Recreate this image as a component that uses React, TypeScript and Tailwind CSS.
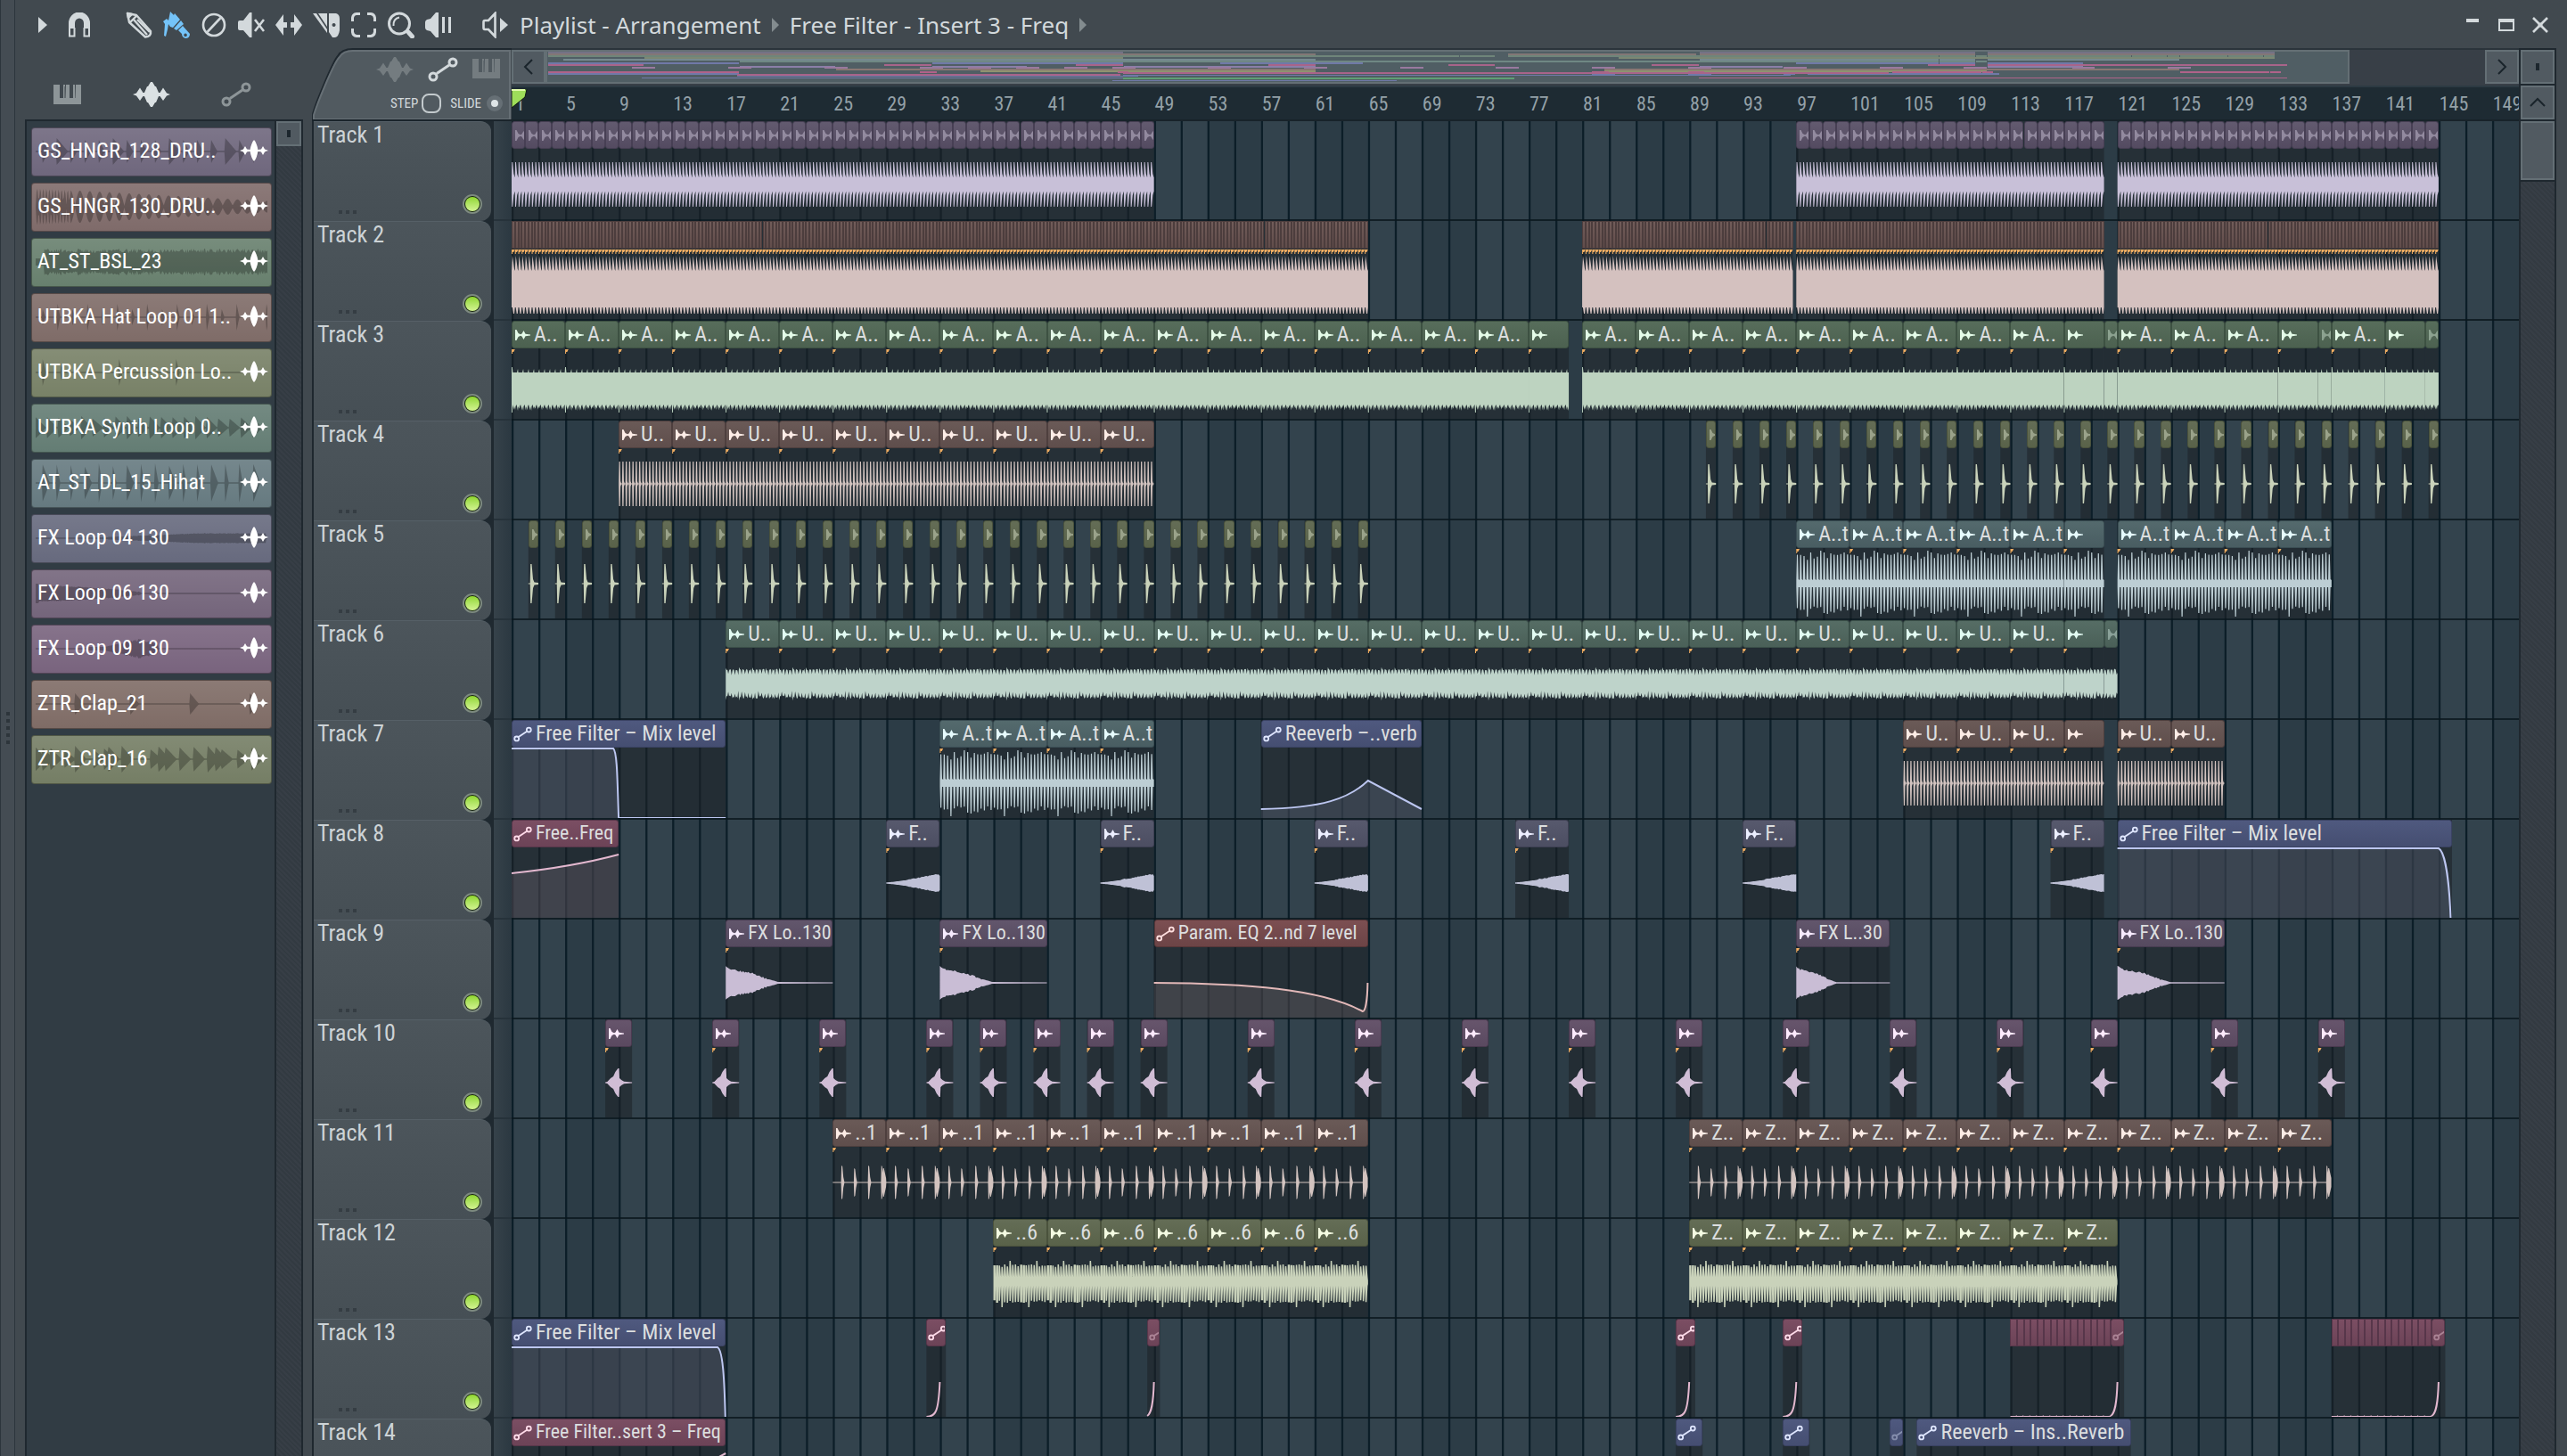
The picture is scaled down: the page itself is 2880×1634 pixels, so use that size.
import React, { useState } from 'react';

const BARS = 150;
const MID = 71;

type Sound =
  | 'drums' | 'kick' | 'bass' | 'hat' | 'perc' | 'synth' | 'ticks'
  | 'rise' | 'fall' | 'swell' | 'clap' | 'claps';

type Look = { head: string; wave: string; icon: string };

type Clips = {
  from: number;
  to: number;
  step?: number;
  every?: number; // distance between starts, when clips don't touch
  label?: string;
  look: keyof typeof LOOKS;
  sound?: Sound;
  curve?: string; // automation line, x in bars from the clip start, y in lane pixels
  faded?: boolean;
  bare?: boolean; // header without an icon
  tight?: boolean; // smaller label
  noMark?: boolean;
};

const LOOKS = {
  plum: { head: 'from-[#625a6f] to-[#544b61] border-[#473f54]', wave: '#c8c0d8', icon: '#e6def2' },
  rust: { head: 'from-[#715c59] to-[#614d4b] border-[#4c3d3d]', wave: '#d4c1bf', icon: '#fbeeea' },
  leaf: { head: 'from-[#576d5b] to-[#4c6150] border-[#3d5142]', wave: '#bdd3c0', icon: '#e4fbe8' },
  clay: { head: 'from-[#6a5a57] to-[#5f4e4c] border-[#4e3f3e]', wave: '#d2c3bf', icon: '#fdece6' },
  olive: { head: 'from-[#646d56] to-[#596249] border-[#4a523c]', wave: '#c9d2ba', icon: '#f4fbe2' },
  sea: { head: 'from-[#546a6d] to-[#495d62] border-[#3b4e54]', wave: '#bdced4', icon: '#e6fbfd' },
  mint: { head: 'from-[#566d65] to-[#4a6058] border-[#3b5049]', wave: '#bed3ca', icon: '#e2fbf2' },
  slate: { head: 'from-[#57596d] to-[#4c4e62] border-[#3e4053]', wave: '#bfc1d6', icon: '#eceeff' },
  violet: { head: 'from-[#62566c] to-[#554a5f] border-[#463b50]', wave: '#c9bdd5', icon: '#f6eafd' },
  grape: { head: 'from-[#67556c] to-[#5a4960] border-[#4a3a50]', wave: '#d0bdd5', icon: '#fdeafd' },
  blue: { head: 'from-[#4f597f] to-[#454e71] border-[#3a4262]', wave: '#bcc6f0', icon: '#dfe6ff' },
  rose: { head: 'from-[#7b4e63] to-[#6c4357] border-[#57364a]', wave: '#e3b8cf', icon: '#ffdbe9' },
  red: { head: 'from-[#7c4f52] to-[#6c4446] border-[#573638]', wave: '#e2b8b8', icon: '#ffdede' },
};

const LEVEL_LONG = 'M0 32H24C24.5 36 24.8 70 24.9 110';
const LEVEL_SHORT = 'M0 32H15.4C15.8 36 15.9 70 15.97 110';
const HIT = 'M0 110C.7 110 .9 104 1 71';
const SHORT_HIT = 'M0 109C.3 106 .45 96 .5 71';

const hit = (from: number, to: number, label?: string): Clips => ({ from, to, look: 'rose', curve: HIT, label });

const TRACKS: Clips[][] = [
  [
    { from: 0, to: 48, step: 1, look: 'plum', sound: 'drums', faded: true, noMark: true },
    { from: 96, to: 119, step: 1, look: 'plum', sound: 'drums', faded: true, noMark: true },
    { from: 120, to: 144, step: 1, look: 'plum', sound: 'drums', faded: true, noMark: true },
  ],
  [
    { from: 0, to: 64, step: 0.25, look: 'rust', sound: 'kick', bare: true },
    { from: 80, to: 95.75, step: 0.25, look: 'rust', sound: 'kick', bare: true },
    { from: 96, to: 119, step: 0.25, look: 'rust', sound: 'kick', bare: true },
    { from: 120, to: 144, step: 0.25, look: 'rust', sound: 'kick', bare: true },
  ],
  [
    { from: 0, to: 76, step: 4, label: 'A..', look: 'leaf', sound: 'bass' },
    { from: 76, to: 79, look: 'leaf', sound: 'bass' },
    { from: 80, to: 116, step: 4, label: 'A..', look: 'leaf', sound: 'bass' },
    { from: 116, to: 119, look: 'leaf', sound: 'bass' },
    { from: 119, to: 120, look: 'leaf', sound: 'bass', faded: true, noMark: true },
    { from: 120, to: 132, step: 4, label: 'A..', look: 'leaf', sound: 'bass' },
    { from: 132, to: 135, look: 'leaf', sound: 'bass' },
    { from: 135, to: 136, look: 'leaf', sound: 'bass', faded: true, noMark: true },
    { from: 136, to: 140, label: 'A..', look: 'leaf', sound: 'bass' },
    { from: 140, to: 143, look: 'leaf', sound: 'bass' },
    { from: 143, to: 144, look: 'leaf', sound: 'bass', faded: true, noMark: true },
  ],
  [
    { from: 8, to: 48, step: 4, label: 'U..', look: 'clay', sound: 'hat' },
    { from: 89.25, to: 144, step: 0.75, every: 2, look: 'olive', sound: 'perc', faded: true, noMark: true },
  ],
  [
    { from: 1.25, to: 64, step: 0.75, every: 2, look: 'olive', sound: 'perc', faded: true, noMark: true },
    { from: 96, to: 116, step: 4, label: 'A..t', look: 'sea', sound: 'ticks' },
    { from: 116, to: 119, look: 'sea', sound: 'ticks' },
    { from: 120, to: 136, step: 4, label: 'A..t', look: 'sea', sound: 'ticks' },
  ],
  [
    { from: 16, to: 116, step: 4, label: 'U..', look: 'mint', sound: 'synth' },
    { from: 116, to: 119, look: 'mint', sound: 'synth' },
    { from: 119, to: 120, look: 'mint', sound: 'synth', faded: true, noMark: true },
  ],
  [
    { from: 0, to: 16, label: 'Free Filter – Mix level', look: 'blue', curve: 'M0 32H7.6C7.9 36 7.9 70 8 110H16' },
    { from: 32, to: 48, step: 4, label: 'A..t', look: 'sea', sound: 'ticks' },
    { from: 56, to: 68, label: 'Reeverb –..verb', look: 'blue', curve: 'M0 100C4.6 99 6.6 88 8 68L12 100' },
    { from: 104, to: 116, step: 4, label: 'U..', look: 'clay', sound: 'hat' },
    { from: 116, to: 119, look: 'clay', sound: 'hat' },
    { from: 120, to: 128, step: 4, label: 'U..', look: 'clay', sound: 'hat' },
  ],
  [
    { from: 0, to: 8, label: 'Free..Freq', look: 'rose', curve: 'M0 60Q4.5 53 8 39', tight: true },
    { from: 28, to: 32, label: 'F..', look: 'slate', sound: 'rise' },
    { from: 44, to: 48, label: 'F..', look: 'slate', sound: 'rise' },
    { from: 60, to: 64, label: 'F..', look: 'slate', sound: 'rise' },
    { from: 75, to: 79, label: 'F..', look: 'slate', sound: 'rise' },
    { from: 92, to: 96, label: 'F..', look: 'slate', sound: 'rise' },
    { from: 115, to: 119, label: 'F..', look: 'slate', sound: 'rise' },
    { from: 120, to: 145, label: 'Free Filter – Mix level', look: 'blue', curve: LEVEL_LONG },
  ],
  [
    { from: 16, to: 24, label: 'FX Lo..130', look: 'violet', sound: 'fall', tight: true },
    { from: 32, to: 40, label: 'FX Lo..130', look: 'violet', sound: 'fall', tight: true },
    { from: 48, to: 64, label: 'Param. EQ 2..nd 7 level', look: 'red', tight: true, curve: 'M0 71C7 71.5 12.5 78 15.6 103C15.8 103 15.95 90 15.97 71' },
    { from: 96, to: 103, label: 'FX L..30', look: 'violet', sound: 'fall', tight: true },
    { from: 120, to: 128, label: 'FX Lo..130', look: 'violet', sound: 'fall', tight: true },
  ],
  [7, 15, 23, 31, 35, 39, 43, 47, 55, 63, 71, 79, 87, 95, 103, 111, 118, 127, 135].map((from) => ({
    from, to: from + 2, look: 'grape', sound: 'swell',
  })),
  [
    { from: 24, to: 64, step: 4, label: '..1', look: 'clay', sound: 'clap' },
    { from: 88, to: 136, step: 4, label: 'Z..', look: 'clay', sound: 'clap' },
  ],
  [
    { from: 36, to: 64, step: 4, label: '..6', look: 'olive', sound: 'claps' },
    { from: 88, to: 120, step: 4, label: 'Z..', look: 'olive', sound: 'claps' },
  ],
  [
    { from: 0, to: 16, label: 'Free Filter – Mix level', look: 'blue', curve: LEVEL_SHORT },
    hit(31, 32.45),
    { from: 47.5, to: 48.45, look: 'rose', curve: SHORT_HIT, faded: true },
    hit(87, 88.45),
    hit(95, 96.45),
    { from: 112, to: 119.5, step: 0.5, look: 'rose', curve: 'M0 110L.4 110L.5 109', bare: true },
    { from: 119.5, to: 120.5, look: 'rose', curve: SHORT_HIT, faded: true },
    { from: 136, to: 143.5, step: 0.5, look: 'rose', curve: 'M0 110L.4 110L.5 109', bare: true },
    { from: 143.5, to: 144.5, look: 'rose', curve: SHORT_HIT, faded: true },
  ],
  [
    { from: 0, to: 16, label: 'Free Filter..sert 3 – Freq', look: 'rose', curve: 'M15.5 43L16 39', tight: true },
    { from: 87, to: 89, look: 'blue', curve: '' },
    { from: 95, to: 97, look: 'blue', curve: '' },
    { from: 103, to: 104, look: 'blue', curve: '', faded: true },
    { from: 105, to: 121, label: 'Reeverb – Ins..Reverb', look: 'blue', curve: '' },
  ],
];

const LIBRARY = [
  { name: 'GS_HNGR_128_DRU..', color: 'bg-[#6f677d]', wave: 'drums' },
  { name: 'GS_HNGR_130_DRU..', color: 'bg-[#7f6b6a]', wave: 'kick' },
  { name: 'AT_ST_BSL_23', color: 'bg-[#68806e]', wave: 'bass' },
  { name: 'UTBKA Hat Loop 01 1..', color: 'bg-[#7f6c68]', wave: 'hat' },
  { name: 'UTBKA Percussion Lo..', color: 'bg-[#788167]', wave: 'perc' },
  { name: 'UTBKA Synth Loop 0..', color: 'bg-[#647d74]', wave: 'synth' },
  { name: 'AT_ST_DL_15_Hihat', color: 'bg-[#667a80]', wave: 'ticks' },
  { name: 'FX Loop 04 130', color: 'bg-[#676a7e]', wave: 'rise' },
  { name: 'FX Loop 06 130', color: 'bg-[#74657b]', wave: 'fall' },
  { name: 'FX Loop 09 130', color: 'bg-[#79647e]', wave: 'swell' },
  { name: 'ZTR_Clap_21', color: 'bg-[#7f6c66]', wave: 'clap' },
  { name: 'ZTR_Clap_16', color: 'bg-[#757e65]', wave: 'claps' },
] as const;

const noise = (i: number) => {
  const n = Math.sin(i * 127.1 + 11.7) * 43758.5453;
  return n - Math.floor(n);
};

// closed outline from [x, top, bottom] samples
const outline = (points: number[][]) =>
  'M' + points.map(([x, t]) => `${x.toFixed(3)} ${t.toFixed(1)}`).join('L') +
  'L' + [...points].reverse().map(([x, , b]) => `${x.toFixed(3)} ${b.toFixed(1)}`).join('L') + 'Z';

// half height of the falling effect over its length, t from 0 to 1
function fallOff(t: number) {
  const stops = [[0, 18.5], [0.1, 15], [0.5, 10.5], [0.75, 5], [0.95, 1.5], [1, 0.7]];
  for (let i = 1; i < stops.length; i++) {
    const [t0, h0] = stops[i - 1];
    const [t1, h1] = stops[i];
    if (t <= t1) return h0 + ((h1 - h0) * (t - t0)) / (t1 - t0);
  }
  return 0.7;
}

function wavePath(sound: Sound, a: number, b: number): string {
  const p: number[][] = [];
  const even = (x: number, h: number) => p.push([x, MID - h, MID + h]);

  if (sound === 'drums') {
    for (let x = a; x < b; x += 0.25) {
      even(x, 8); even(x + 0.02, 25); even(x + 0.08, 25); even(x + 0.16, 12); even(x + 0.24, 8);
    }
    even(b, 8);
  } else if (sound === 'kick') {
    for (let x = a; x < b; x += 0.25) {
      p.push([x, 56, 97], [x + 0.06, 39, 97], [x + 0.13, 46, 104], [x + 0.2, 54, 104], [x + 0.25, 56, 97]);
    }
  } else if (sound === 'bass') {
    for (let x = a; x < b - 0.01; x += 0.1) {
      const i = Math.round((x % 4) * 10) % 40;
      if (i === 0) p.push([x, 52, 103], [x + 0.06, 52, 103]);
      else p.push([x, 58, 96]);
      p.push([x + 0.07, i % 4 === 0 ? 54 : 58, i % 3 ? 98 + noise(i) * 3 : 94]);
    }
    p.push([b, 58, 96]);
  } else if (sound === 'hat') {
    for (let x = a; x < b; x += 0.25) {
      even(x, 0.5); even(x + 0.03, 25); even(x + 0.11, 25); even(x + 0.14, 3); even(x + 0.2, 0.5);
    }
    even(b, 0.5);
  } else if (sound === 'perc') {
    even(a, 0.5); even(a + 0.13, 0.5); even(a + 0.16, 22); even(a + 0.25, 22);
    even(a + 0.35, 5); even(a + 0.45, 1.5); even(b, 1);
  } else if (sound === 'ticks') {
    for (let x = a; x < b; x += 0.25) {
      const i = Math.round((x % 4) * 4);
      const up = i === 7 ? 37 : 26 + noise(i) * 9;
      const dn = i === 3 ? 37 : 25 + noise(i + 40) * 9;
      p.push([x, 67, 75], [x + 0.04, MID - up, MID + dn], [x + 0.12, MID - up, MID + dn], [x + 0.17, 66, 75]);
    }
    even(b, 4);
  } else if (sound === 'synth') {
    for (let x = a; x < b; x += 0.0625) {
      const i = Math.round((x % 4) * 16) % 64;
      const loud = i % 16 === 0 ? 19 : i % 4 < 3 ? 16.5 : 11;
      p.push([x, MID - loud + noise(i) * 2, MID + loud + 1 - noise(i + 9) * 4]);
    }
    even(b, 12);
  } else if (sound === 'rise') {
    for (let x = a; x <= b; x += 0.1) {
      const t = (x - a) / 4;
      even(x, 0.7 + 8.5 * Math.min(1, Math.pow(t, 1.3) * 1.1) + (t > 0.4 ? noise(x * 10) : 0));
    }
    even(b, 8);
  } else if (sound === 'fall') {
    const length = b - a - 4;
    for (let x = a; x < a + length; x += 0.1) {
      const t = (x - a) / length;
      even(x, fallOff(t) + (t < 0.8 ? noise(x * 10) * 2 - 1 : 0));
    }
    even(b, 0.6);
  } else if (sound === 'swell') {
    even(a, 0.5); even(a + 0.15, 1); even(a + 0.4, 5); even(a + 0.6, 7); even(a + 0.75, 12);
    even(a + 0.95, 16); even(a + 1.03, 16); even(a + 1.06, 5); even(a + 1.2, 3); even(a + 1.4, 1.3); even(b, 0.6);
  } else if (sound === 'clap') {
    for (let x = a; x < b; x += 4) {
      even(x, 0.6);
      [0.65, 1.6, 2.65].forEach((at, i) => {
        const h = i === 1 ? 16 : 19;
        even(x + at - 0.03, 0.6); even(x + at, h); even(x + at + 0.07, h - 1);
        even(x + at + 0.14, 6); even(x + at + 0.22, 0.6);
      });
      even(x + 3.6, 0.6); even(x + 3.63, 19); even(x + 3.69, 18); even(x + 3.73, 11);
      even(x + 3.76, 16); even(x + 3.82, 16); even(x + 3.98, 5);
    }
  } else {
    for (let x = a; x < b; x += 0.2) {
      const i = Math.round((x % 4) * 5) % 20;
      const up = i % 10 === 6 ? 24 : 17 + noise(i) * 3;
      const dn = i % 10 === 3 ? 28 : 20 + noise(i + 3) * 3;
      p.push([x, MID - up, MID + dn], [x + (i % 10 < 2 ? 0.16 : 0.1), MID - up, MID + dn], [x + 0.17, 65, 75]);
    }
    even(b, 2);
  }
  return outline(p.map(([x, t, bt]) => [Math.min(x, b), t, bt]));
}

// bursts for the clip previews in the picker, drawn in a 264x44 box
function previewPath(kind: Sound): string {
  const h = new Array(265).fill(0.8);
  const burst = (at: number, amp: number, decay: number) => {
    for (let x = Math.max(0, at); x < 265 && x < at + decay; x++) h[x] = Math.max(h[x], amp * (1 - (x - at) / decay));
  };
  if (kind === 'drums') for (let i = 0; i < 16; i++) burst(8 + i * 16, i % 4 === 1 ? 15 : 13, i % 4 === 1 ? 13 : 7);
  if (kind === 'kick') for (let x = 0; x < 265; x++) h[x] = 1 + Math.abs(Math.sin(x * (x < 40 ? 0.9 : 0.28))) * (20 - x * 0.055);
  if (kind === 'bass') for (let x = 0; x < 265; x++) h[x] = x < 10 ? 4 : 10 + noise(x) * 5;
  if (kind === 'hat') for (let i = 0; i < 16; i++) burst(8 + i * 17, i % 2 ? 15 : 9, 3);
  if (kind === 'perc') [8, 29, 95, 160].forEach((x, i) => burst(x, i === 1 ? 9 : 15, 4));
  if (kind === 'synth') for (let i = 0; i < 20; i++) burst(i * 13, 9 + noise(i) * 4, 12);
  if (kind === 'ticks') for (let i = 0; i < 16; i++) burst(8 + i * 16, 18 + noise(i) * 4, i % 3 ? 4 : 8);
  if (kind === 'rise') for (let x = 70; x < 263; x++) h[x] = Math.min(5, (x - 60) * 0.04) + noise(x) * 0.7;
  if (kind === 'fall') for (let x = 0; x < 120; x++) h[x] = x < 4 ? 11 : Math.max(0.8, 8 - Math.pow(x / 45, 2) + noise(x));
  if (kind === 'swell') for (let x = 60; x < 140; x++) h[x] = 2 + Math.max(0, 8 - Math.abs(x - 118) * 0.2) * (0.8 + noise(x) * 0.4);
  if (kind === 'clap') [45, 108, 176, 244].forEach((x) => burst(x, 12, 10));
  if (kind === 'claps') [0, 8, 17, 33, 45, 66, 78, 83, 98, 131, 140, 148, 164, 180, 196, 205, 212, 230, 246].forEach((x, i) => burst(x, 9 + noise(i) * 6, 13));
  return outline(h.map((v, x) => [x, 22 - v, 22 + v]));
}

function AutomationIcon({ className = '' }: { className?: string }) {
  return (
    <svg viewBox="0 0 34 28" className={className} fill="none" stroke="currentColor" strokeWidth="3">
      <circle cx="6" cy="22" r="4" />
      <circle cx="28" cy="6" r="4" />
      <path d="M10 18.500L24 9" />
    </svg>
  );
}

function WaveIcon({ className = '' }: { className?: string }) {
  return (
    <svg viewBox="0 0 42 28" className={className} fill="currentColor">
      <path d="M0 14L4 12.500L8 6.500L11.500 12L13 12L16 5H17L20 0H22L25 5H26L29 12L30.500 12L34 6.500L38 12.500L42 14L38 15.500L34 21L30.500 16L29 16L26 23H25L22 28H20L17 23H16L13 16L11.500 16L8 21L4 15.500Z" />
    </svg>
  );
}

function SparkIcon({ className = '' }: { className?: string }) {
  return (
    <svg viewBox="0 0 32 24" className={className} fill="currentColor">
      <path d="M0 12L4 10.500L6 7L8 10.500L11.500 11C12.500 6 14 2 16 0C18 2 19.500 6 20.500 11L24 10.500L26 7L28 10.500L32 12L28 13.500L26 17L24 13.500L20.500 13C19.500 18 18 22 16 24C14 22 12.500 18 11.500 13L8 13.500L6 17L4 13.500Z" />
    </svg>
  );
}

function PianoIcon({ className = '' }: { className?: string }) {
  return (
    <svg viewBox="0 0 31 22" className={className} fill="currentColor">
      <path d="M0 0H7V15H11V0H13V2H12.500V15H13.500L14 0H18V15H22V0H24L24.500 15H25V0H31V22H0Z" />
    </svg>
  );
}

function ClipIcon({ color }: { color: string }) {
  return (
    <svg viewBox="0 0 17 12" className="ml-[3px] mt-px h-3 w-[17px] shrink-0" fill={color}>
      <path d="M0 0L1.500 0L3.500 4L6 5.200L7.500 4.500L9.500 1L11.500 4.800L17 5.500V6.500L11.500 7.200L9.500 11L7.500 7.500L6 6.800L3.500 8L1.500 12H0Z" />
    </svg>
  );
}

const TOOLS: { name: string; art: React.ReactNode }[] = [
  {
    name: 'Draw',
    art: (
      <g fill="none" stroke="currentColor" strokeWidth="2.400" strokeLinejoin="round">
        <path d="M2 2L12 4L28 22Q29 28 22 28.500L4 12Z" />
        <path d="M12 5L5 12M9 9L24 26M13 9L27 23" />
        <path d="M2 2L7 3L3 7Z" fill="currentColor" />
      </g>
    ),
  },
  {
    name: 'Paint',
    art: (
      <g fill="currentColor">
        <path d="M0 11L4 8L6 10L8 0L12 4L13 2L19 9L11 18L8 17L6 14L5 20L3 28L1 27L2 14Z" />
        <path d="M20 10L23 14L15 21L12 19Z" />
        <path fillRule="evenodd" d="M22 16L30 25Q30 30 25 30Q21 29 21 25L17 21ZM25 24.500a1.800 1.800 0 1 0 .1 0Z" />
      </g>
    ),
  },
  {
    name: 'Delete',
    art: (
      <g fill="none" stroke="currentColor" strokeWidth="2.600">
        <circle cx="15" cy="15" r="12" />
        <path d="M7.500 23L22.500 7" />
      </g>
    ),
  },
  {
    name: 'Mute',
    art: (
      <g>
        <path fill="currentColor" d="M0 12Q0 10 2 10H6L13 1H15.500V29H13L6 21H2Q0 21 0 19Z" />
        <path d="M19 9L29 22M29 9L19 22" stroke="currentColor" strokeWidth="2.600" />
      </g>
    ),
  },
  {
    name: 'Slip',
    art: <path fill="currentColor" d="M0 15L9 3V12H13V18H9V27ZM30 15L21 3V12H17V18H21V27Z" />,
  },
  {
    name: 'Slice',
    art: (
      <g fill="currentColor">
        <path d="M0 2H4L16 20V24Z" />
        <path d="M6 2H16V17Z" />
        <path fillRule="evenodd" d="M18 2H26Q30 3 30 8V21Q29 28 25 29H22L18 23ZM23.500 13a2 2 0 1 0 .1 0Z" />
      </g>
    ),
  },
  {
    name: 'Select',
    art: (
      <path
        fill="none" stroke="currentColor" strokeWidth="3"
        d="M2.500 11V7Q3 3 7 2.500H11M19 2.500H23Q27 3 27.500 7V11M27.500 19V23Q27 27 23 27.500H19M11 27.500H7Q3 27 2.500 23V19"
      />
    ),
  },
  {
    name: 'Zoom',
    art: (
      <g fill="none" stroke="currentColor">
        <circle cx="13" cy="13.500" r="11.500" strokeWidth="3" />
        <path d="M6.500 16Q6 8 13 6.500" strokeWidth="2" />
        <path d="M23.500 23.500L27.500 28" strokeWidth="5" strokeLinecap="round" />
      </g>
    ),
  },
  {
    name: 'Playback',
    art: (
      <g fill="currentColor">
        <path d="M0 12Q0 10 2 9L6 8L12 1H15V29H12L6 22L2 21Q0 20 0 18Z" />
        <path d="M19 6H22V24H19ZM26 6H29V24H26Z" />
      </g>
    ),
  },
];

function Toolbar() {
  const [tool, setTool] = useState('Paint');

  return (
    <header className="flex h-[54px] shrink-0 items-center pl-[21px] pr-[10px] pt-[2px] text-[#d3d9dc]">
      <button aria-label="Menu" className="w-5">
        <svg viewBox="0 0 10 18" className="mx-auto h-[18px] w-[10px]" fill="currentColor"><path d="M0 0L10 9L0 18Z" /></svg>
      </button>
      <button aria-label="Snap" className="ml-4 w-[30px]">
        <svg viewBox="0 0 26 28" className="mx-auto h-7 w-[26px]" fill="none" stroke="currentColor">
          <path d="M4.500 18V12A8.500 9 0 0 1 21.500 12V18" strokeWidth="7" />
          <path d="M2 17V26.500H7.500V17M18.500 17V26.500H24V17" strokeWidth="2" />
        </svg>
      </button>
      <div className="ml-[31px] flex">
        {TOOLS.map((t) => (
          <button
            key={t.name}
            aria-label={t.name}
            onClick={() => setTool(t.name)}
            className={`w-[42px] ${tool === t.name ? 'text-[#74c3f8]' : ''}`}
          >
            <svg viewBox="0 0 30 30" className="mx-auto size-[30px]">{t.art}</svg>
          </button>
        ))}
      </div>
      <button aria-label="Preview" className="ml-7">
        <svg viewBox="0 0 30 30" className="size-[30px]" fill="none" stroke="currentColor" strokeWidth="2.600">
          <path d="M14.500 2V28L7 20H3Q1.500 20 1.500 18V12Q1.500 10 3 10H7Z" />
          <path d="M20 7L29 15L20 23Z" fill="currentColor" stroke="none" />
        </svg>
      </button>
      <nav className="ml-3 flex items-center gap-3 pb-px font-['Noto_Sans',sans-serif] text-[26px] leading-8">
        <a href="#playlist">Playlist - Arrangement</a>
        <Arrow />
        <a href="#clip">Free Filter - Insert 3 - Freq</a>
        <Arrow />
      </nav>
      <div className="ml-auto flex items-center">
        <button aria-label="Minimize" className="w-10">
          <svg viewBox="0 0 18 18" className="mx-auto size-[18px]" fill="currentColor"><path d="M2 2H16V6H2Z" /></svg>
        </button>
        <button aria-label="Maximize" className="w-9">
          <svg viewBox="0 0 18 18" className="mx-auto size-[18px]" fill="currentColor"><path fillRule="evenodd" d="M0 2H18V16H0ZM2 6V14H16V6Z" /></svg>
        </button>
        <button aria-label="Close" className="w-10">
          <svg viewBox="0 0 18 18" className="mx-auto size-[18px]" fill="none" stroke="currentColor" strokeWidth="2.600">
            <path d="M1 1L17 17M17 1L1 17" /><circle cx="9" cy="9" r="2.500" fill="currentColor" stroke="none" />
          </svg>
        </button>
      </div>
    </header>
  );
}

function Arrow() {
  return <svg viewBox="0 0 8 16" className="h-4 w-2" fill="#838c8f"><path d="M0 0L8 8L0 16Z" /></svg>;
}

function Picker() {
  return (
    <aside className="flex w-[312px] shrink-0 flex-col">
      <div className="flex h-20 shrink-0 items-center justify-between pl-8 pr-[58px] pt-6 text-[#8d9598]">
        <button aria-label="Patterns"><PianoIcon className="h-[22px] w-[31px]" /></button>
        <button aria-label="Audio clips" className="text-[#dbe1e3]"><WaveIcon className="h-7 w-[42px]" /></button>
        <button aria-label="Automation clips"><AutomationIcon className="h-7 w-[34px]" /></button>
      </div>
      <div className="flex min-h-0 flex-1 border-x-2 border-t-2 border-[#1f282f] bg-[#313c44]">
        <ul className="flex min-w-0 flex-1 flex-col gap-[7px] pl-[5px] pr-[3px] pt-[7px]">
          {LIBRARY.map((item) => (
            <li key={item.name}>
              <button className={`relative flex h-[55px] w-full items-center overflow-hidden rounded-sm border border-black/30 pb-1 ${item.color}`}>
                <span className="absolute inset-0 bg-linear-to-b from-white/10 to-transparent" />
                <svg viewBox="0 0 264 44" preserveAspectRatio="none" className="absolute inset-x-1 top-1 h-11 w-[calc(100%-8px)] fill-black/25">
                  <path d={previewPath(item.wave)} />
                </svg>
                <span className="relative whitespace-nowrap pl-[6px] text-2xl leading-8 text-white">{item.name}</span>
                <SparkIcon className="relative ml-auto mr-[3px] h-6 w-8 shrink-0 text-white" />
              </button>
            </li>
          ))}
        </ul>
        <div className="w-[30px] border-l-2 border-[#1f282f] bg-[repeating-linear-gradient(45deg,#373e46_0_2px,#323a41_2px_4px)]">
          <button aria-label="Scroll options" className="flex h-7 w-full items-center justify-center border-2 border-[#646f75] bg-[#515a61]">
            <span className="h-2 w-1 bg-[#1c262d]" />
          </button>
        </div>
      </div>
    </aside>
  );
}

function Corner() {
  return (
    <div className="relative w-[224px] shrink-0 text-[#d3d9dc]">
      <svg viewBox="0 0 224 82" className="absolute inset-0 h-full w-full">
        <path d="M1 82V74C4 62 24 14 29 9Q33 1 46 1H224" fill="none" stroke="#1f282f" strokeWidth="2" />
        <path d="M2 80V75C6 62 25 15 31 10Q35 3 46 3H222V80Z" fill="#515a60" stroke="#666f75" strokeWidth="2" />
        <path d="M0 81H224" stroke="#1a242b" strokeWidth="2" />
      </svg>
      <div className="relative flex h-[42px] items-end justify-end gap-4 pr-[13px]">
        <button aria-label="Show audio" className="pb-1 text-[#747c80]"><WaveIcon className="h-7 w-[42px]" /></button>
        <button aria-label="Show automation" className="pb-1"><AutomationIcon className="h-7 w-[34px]" /></button>
        <button aria-label="Show patterns" className="pb-2 text-[#747c80]"><PianoIcon className="h-[22px] w-[31px]" /></button>
      </div>
      <div className="relative flex h-10 items-center justify-end gap-[10px] pr-[10px] text-[15px] leading-5">
        <label className="flex items-center gap-1">
          STEP
          <input type="checkbox" className="size-[22px] appearance-none rounded-lg border-2 border-[#c3cacd]" />
        </label>
        <label className="flex items-center gap-[6px]">
          SLIDE
          <input type="radio" defaultChecked className="size-[18px] appearance-none rounded-full border-[5px] border-[#666f75] bg-[#dfe5e7]" />
        </label>
      </div>
    </div>
  );
}

const MINI_COLORS = ['#8d819c', '#a58882', '#84a088', '#9aa37d', '#8fa9ae', '#84a59a', '#7079a8', '#a8648a', '#8b7fa8', '#99799f', '#8a7773', '#8f9370', '#b0638a', '#7079a8'];

function Overview() {
  const unit = 13.47;
  return (
    <div className="flex h-[42px] border-t-2 border-[#2b343b] bg-[#383f47]">
      <ScrollButton label="Scroll left" path="M13 3L5 11L13 19" />
      <div className="flex min-w-0 flex-1">
        <div className="h-[38px] w-[93%] border-2 border-[#646f74] bg-[#505e64]">
          <svg viewBox="0 0 2021 34" preserveAspectRatio="none" className="h-full w-full" shapeRendering="crispEdges">
            {TRACKS.flatMap((clips, row) =>
              clips.map((c, i) => (
                <rect
                  key={`${row}-${i}`}
                  x={c.from * unit + 1}
                  y={row < 6 ? row * 2 : row * 1.7 + 2}
                  width={(c.to - c.from) * unit - 1}
                  height="2"
                  fill={MINI_COLORS[row]}
                  opacity={row < 6 ? 0.6 : 1}
                />
              ))
            )}
            <g fill="#7079a8">
              <rect x="213" y="25" width="430" height="2" fill="#a8648a" />
              <rect x="213" y="27" width="450" height="1" />
              <rect x="106" y="29" width="540" height="1" />
              <rect x="538" y="29" width="108" height="1" />
              <rect x="646" y="23" width="860" height="2" fill="#a8648a" />
              <rect x="646" y="26" width="750" height="1" />
              <rect x="646" y="29" width="440" height="2" fill="#5f9f74" />
              <rect x="634" y="32" width="320" height="1" />
              <rect x="1293" y="29" width="660" height="1" fill="#b0638a" />
            </g>
          </svg>
        </div>
      </div>
      <ScrollButton label="Scroll right" path="M5 3L13 11L5 19" />
    </div>
  );
}

function ScrollButton({ label, path }: { label: string; path: string }) {
  return (
    <button aria-label={label} className="flex h-[38px] w-[38px] shrink-0 items-center justify-center border-2 border-[#646f75] bg-[#515a61]">
      <svg viewBox="0 0 18 22" className="h-[22px] w-[18px]" fill="none" stroke="#1a242b" strokeWidth="2"><path d={path} /></svg>
    </button>
  );
}

function Ruler() {
  return (
    <div className="relative flex h-10 overflow-hidden border-b-2 border-t-2 border-b-[#18232a] border-t-[#2d3a43] bg-[#1e2b33] text-[#94a1a8]">
      {Array.from({ length: 38 }, (_, i) => (
        <span key={i} className={`w-[calc(400%/150)] shrink-0 pt-[5px] text-[22px] leading-7 ${i ? 'pl-px' : 'pl-1'}`}>{i * 4 + 1}</span>
      ))}
      <svg viewBox="0 0 18 22" className="absolute left-0 top-[2px] h-[22px] w-[18px]">
        <path d="M0 0H17L15 9L0 21Z" fill="#9ede5a" stroke="#0e1a10" />
        <path d="M0 1H15" stroke="#e2fbab" strokeWidth="2" />
      </svg>
    </div>
  );
}

function Grid() {
  const shade = Array.from({ length: 19 }, (_, i) => `M${i * 8} 0h4v1h-4z`).join('');
  const lines = Array.from({ length: 75 }, (_, i) => `M${i * 2} 0h.15v1h-.15z`).join('');
  return (
    <svg viewBox={`0 0 ${BARS} 1`} preserveAspectRatio="none" className="absolute inset-0 h-full w-full bg-[#2c3c46]">
      <path d={shade} fill="#33434d" />
      <path d={lines} fill="#0c1e28" />
    </svg>
  );
}

function expand(c: Clips) {
  const step = c.step ?? c.to - c.from;
  const every = c.every ?? step;
  const list: { start: number; width: number }[] = [];
  for (let x = c.from; x < c.to - 0.01; x += every) list.push({ start: x, width: step });
  return list;
}

const pct = (bars: number) => `${(bars / BARS) * 100}%`;

function Lane({ clips }: { clips: Clips[] }) {
  return (
    <div className="relative min-w-0 flex-1 overflow-hidden border-b-2 border-[#0a161d]/80">
      <svg viewBox={`0 0 ${BARS} 110`} preserveAspectRatio="none" className="absolute inset-0 h-[110px] w-full">
        {clips.map((c, i) => {
          const look: Look = LOOKS[c.look];
          const parts = expand(c);
          const spans = c.every ? parts.map((p) => [p.start, p.start + p.width]) : [[c.from, c.to]];
          return (
            <g key={i}>
              {spans.map(([a, b]) => (
                <g key={a}>
                  <rect x={a} y="0" width={b - a} height="110" fill="#1e2327" fillOpacity=".58" />
                  {c.sound && <path d={wavePath(c.sound, a, b)} fill={look.wave} />}
                </g>
              ))}
              {c.curve && parts.map((p) => (
                <g key={p.start} transform={`translate(${p.start} 0)`}>
                  {(p.width === 8 || (p.width > 2 && c.look !== 'rose')) && (
                    <path d={`${c.curve}V110H0Z`} fill={look.wave} fillOpacity=".14" />
                  )}
                  <path d={c.curve} fill="none" stroke={look.wave} strokeWidth="2" vectorEffect="non-scaling-stroke" />
                </g>
              ))}
              {c.sound && !c.noMark && parts.map((p) => (
                <path key={p.start} d={`M${p.start} 32h.25l-.1 3h-.08v2h-.07z`} fill="#efad62" />
              ))}
            </g>
          );
        })}
      </svg>
      {clips.map((c) =>
        expand(c).map((p) => (
          <div
            key={p.start}
            className={`absolute top-0 flex h-[31px] items-center overflow-hidden border bg-linear-to-b ${c.bare ? '' : 'rounded-[3px]'} ${LOOKS[c.look].head}`}
            style={{ left: pct(p.start), width: pct(p.width) }}
          >
            {!c.bare && (
              <span className={`flex shrink-0 ${c.faded ? 'opacity-40' : ''}`} style={{ color: LOOKS[c.look].icon }}>
                {c.sound ? <ClipIcon color={LOOKS[c.look].icon} /> : <AutomationIcon className="ml-px h-[18px] w-[21px] shrink-0" />}
              </span>
            )}
            {c.label && (
              <span className={`ml-1 whitespace-nowrap pb-[2px] leading-7 text-[#dcdedf] ${c.tight ? 'text-[22px]' : 'text-2xl'}`}>
                {c.label}
              </span>
            )}
          </div>
        ))
      )}
    </div>
  );
}

function Track({ index, clips }: { index: number; clips: Clips[] }) {
  const [on, setOn] = useState(true);

  return (
    <div className="flex h-28 shrink-0">
      <div className="w-[202px] shrink-0 bg-[#1f2930] pr-[3px]">
        <div className="relative flex h-full flex-col justify-between rounded-r-xl border-t border-[#566067] bg-linear-to-b from-[#4c555b] to-[#464f55] pl-1">
          <span className="text-[26px] leading-7 text-[#cdd3d6]">Track {index}</span>
          <div className="flex items-end justify-between pb-2 pl-6 pr-[10px]">
            <div className="flex gap-1">
              <i className="size-1 bg-[#353d43]" /><i className="size-1 bg-[#353d43]" /><i className="size-1 bg-[#353d43]" />
            </div>
            <button
              aria-label={`Track ${index} on`}
              aria-pressed={on}
              onClick={() => setOn(!on)}
              className={`size-[22px] rounded-full border-2 border-[#7d8a80] p-px ${on ? 'bg-[#14240a]' : 'bg-[#222]'}`}
            >
              <span className={`block size-full rounded-full ${on ? 'bg-linear-to-b from-[#8fd62a] to-[#d4f490]' : 'bg-[#3a4a2a]'}`} />
            </button>
          </div>
        </div>
      </div>
      <div className="w-5 shrink-0 border-b-2 border-[#26323a] bg-linear-to-r from-[#36424a] to-[#2b3841]" />
      <Lane clips={clips} />
    </div>
  );
}

export default function App() {
  return (
    <div className="flex h-screen overflow-hidden bg-[#41494f] font-['Roboto_Condensed','Roboto','Liberation_Sans',sans-serif]">
      <div className="flex w-[17px] shrink-0 items-center justify-center border-x border-[#2c353c] bg-[#444c53]">
        <div className="flex flex-col gap-1">
          {[0, 1, 2, 3, 4].map((i) => <i key={i} className="size-1 bg-[#2d353b]" />)}
        </div>
      </div>
      <div className="flex min-w-0 flex-1 flex-col">
        <Toolbar />
        <main className="flex min-h-0 flex-1 gap-[10px] pl-[11px]">
          <Picker />
          <section className="flex min-w-0 flex-1 flex-col">
            <div className="flex h-[82px] shrink-0">
              <Corner />
              <div className="min-w-0 flex-1">
                <Overview />
                <Ruler />
              </div>
            </div>
            <div className="relative min-h-0 flex-1 overflow-hidden border-l-2 border-[#1f282f]">
              <div className="absolute inset-y-0 left-[222px] right-0"><Grid /></div>
              <div className="relative">
                {TRACKS.map((clips, i) => <Track key={i} index={i + 1} clips={clips} />)}
              </div>
            </div>
          </section>
          <div className="-ml-[10px] mr-3 flex w-[42px] shrink-0 flex-col gap-[2px] border-2 border-b-0 border-[#1f282f] bg-[#1f282f]">
            <button aria-label="View options" className="flex h-[38px] shrink-0 items-center justify-center border-2 border-[#646f75] bg-[#515a61]">
              <span className="h-2 w-1 bg-[#1c262d]" />
            </button>
            <ScrollButton label="Scroll up" path="M1 15L9 7L17 15" />
            <div className="h-[66px] shrink-0 border-2 border-[#646f75] bg-[#515a61]" />
            <div className="flex-1 bg-[repeating-linear-gradient(45deg,#373e46_0_2px,#333a41_2px_4px)]" />
          </div>
        </main>
      </div>
    </div>
  );
}
